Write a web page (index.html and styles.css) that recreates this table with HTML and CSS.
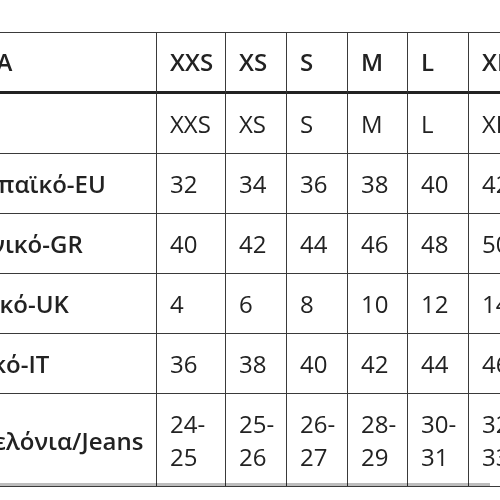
FILE: index.html
```html
<!DOCTYPE html>
<html lang="el">
<head>
<meta charset="utf-8">
<title>Μεγέθη</title>
<link rel="stylesheet" href="styles.css">
</head>
<body>
<div class="scroller">
  <table class="sizes">
    <thead>
      <tr>
        <th class="label">ΧΩΡΑ</th>
        <th class="c1">XXS</th>
        <th class="c2">XS</th>
        <th class="c3">S</th>
        <th class="c4">M</th>
        <th class="c5">L</th>
        <th class="c6">XL</th>
        <th class="c7">XXL</th>
      </tr>
    </thead>
    <tbody>
      <tr><td class="label"></td><td>XXS</td><td>XS</td><td>S</td><td>M</td><td>L</td><td>XL</td><td>XXL</td></tr>
      <tr><td class="label">Ευρωπαϊκό-EU</td><td>32</td><td>34</td><td>36</td><td>38</td><td>40</td><td>42</td><td>44</td></tr>
      <tr><td class="label">Ελληνικό-GR</td><td>40</td><td>42</td><td>44</td><td>46</td><td>48</td><td>50</td><td>52</td></tr>
      <tr><td class="label">Αγγλικό-UK</td><td>4</td><td>6</td><td>8</td><td>10</td><td>12</td><td>14</td><td>16</td></tr>
      <tr><td class="label">Ιταλικό-IT</td><td>36</td><td>38</td><td>40</td><td>42</td><td>44</td><td>46</td><td>48</td></tr>
      <tr><td class="label">Παντελόνια/Jeans</td><td>24-<br>25</td><td>25-<br>26</td><td>26-<br>27</td><td>28-<br>29</td><td>30-<br>31</td><td>32-<br>33</td><td>34-<br>35</td></tr>
    </tbody>
  </table>
  <div class="thumb"></div>
</div>
</body>
</html>
```

FILE: styles.css
```css
html, body {
  margin: 0;
  padding: 0;
  background: #fff;
}

.scroller {
  position: relative;
  margin-top: 32px;
  width: 500px;
  overflow: hidden;
}

.sizes {
  border-collapse: separate;
  border-spacing: 0;
  table-layout: fixed;
  margin-left: -78px;
  width: 683px;
  font-family: "Open Sans", "Noto Sans", sans-serif;
  font-size: 24px;
  line-height: 33px;
  color: #222;
  border-top: 1px solid #3a3a3a;
}

.sizes th,
.sizes td {
  box-sizing: border-box;
  text-align: left;
  vertical-align: middle;
  padding: 13px 0 13px 13px;
  border-right: 1px solid #3a3a3a;
  border-bottom: 1px solid #3a3a3a;
  white-space: nowrap;
  overflow: hidden;
}

.sizes th {
  font-weight: 600;
  padding-top: 12px;
  padding-bottom: 13px;
  border-bottom: 3px solid #222;
}

.sizes th.label {
  padding-left: 26px;
}

.sizes td {
  font-weight: 400;
}

.sizes td.label {
  font-weight: 600;
}

.label { width: 235px; }
.c1 { width: 69px; }
.c2 { width: 61px; }
.c3 { width: 61px; }
.c4 { width: 60px; }
.c5 { width: 61px; }
.c6 { width: 61px; }
.c7 { width: 75px; }

.thumb {
  position: absolute;
  left: 0;
  bottom: 1px;
  width: 490px;
  height: 3px;
  background: #bdbdbd;
  mix-blend-mode: multiply;
}
```
